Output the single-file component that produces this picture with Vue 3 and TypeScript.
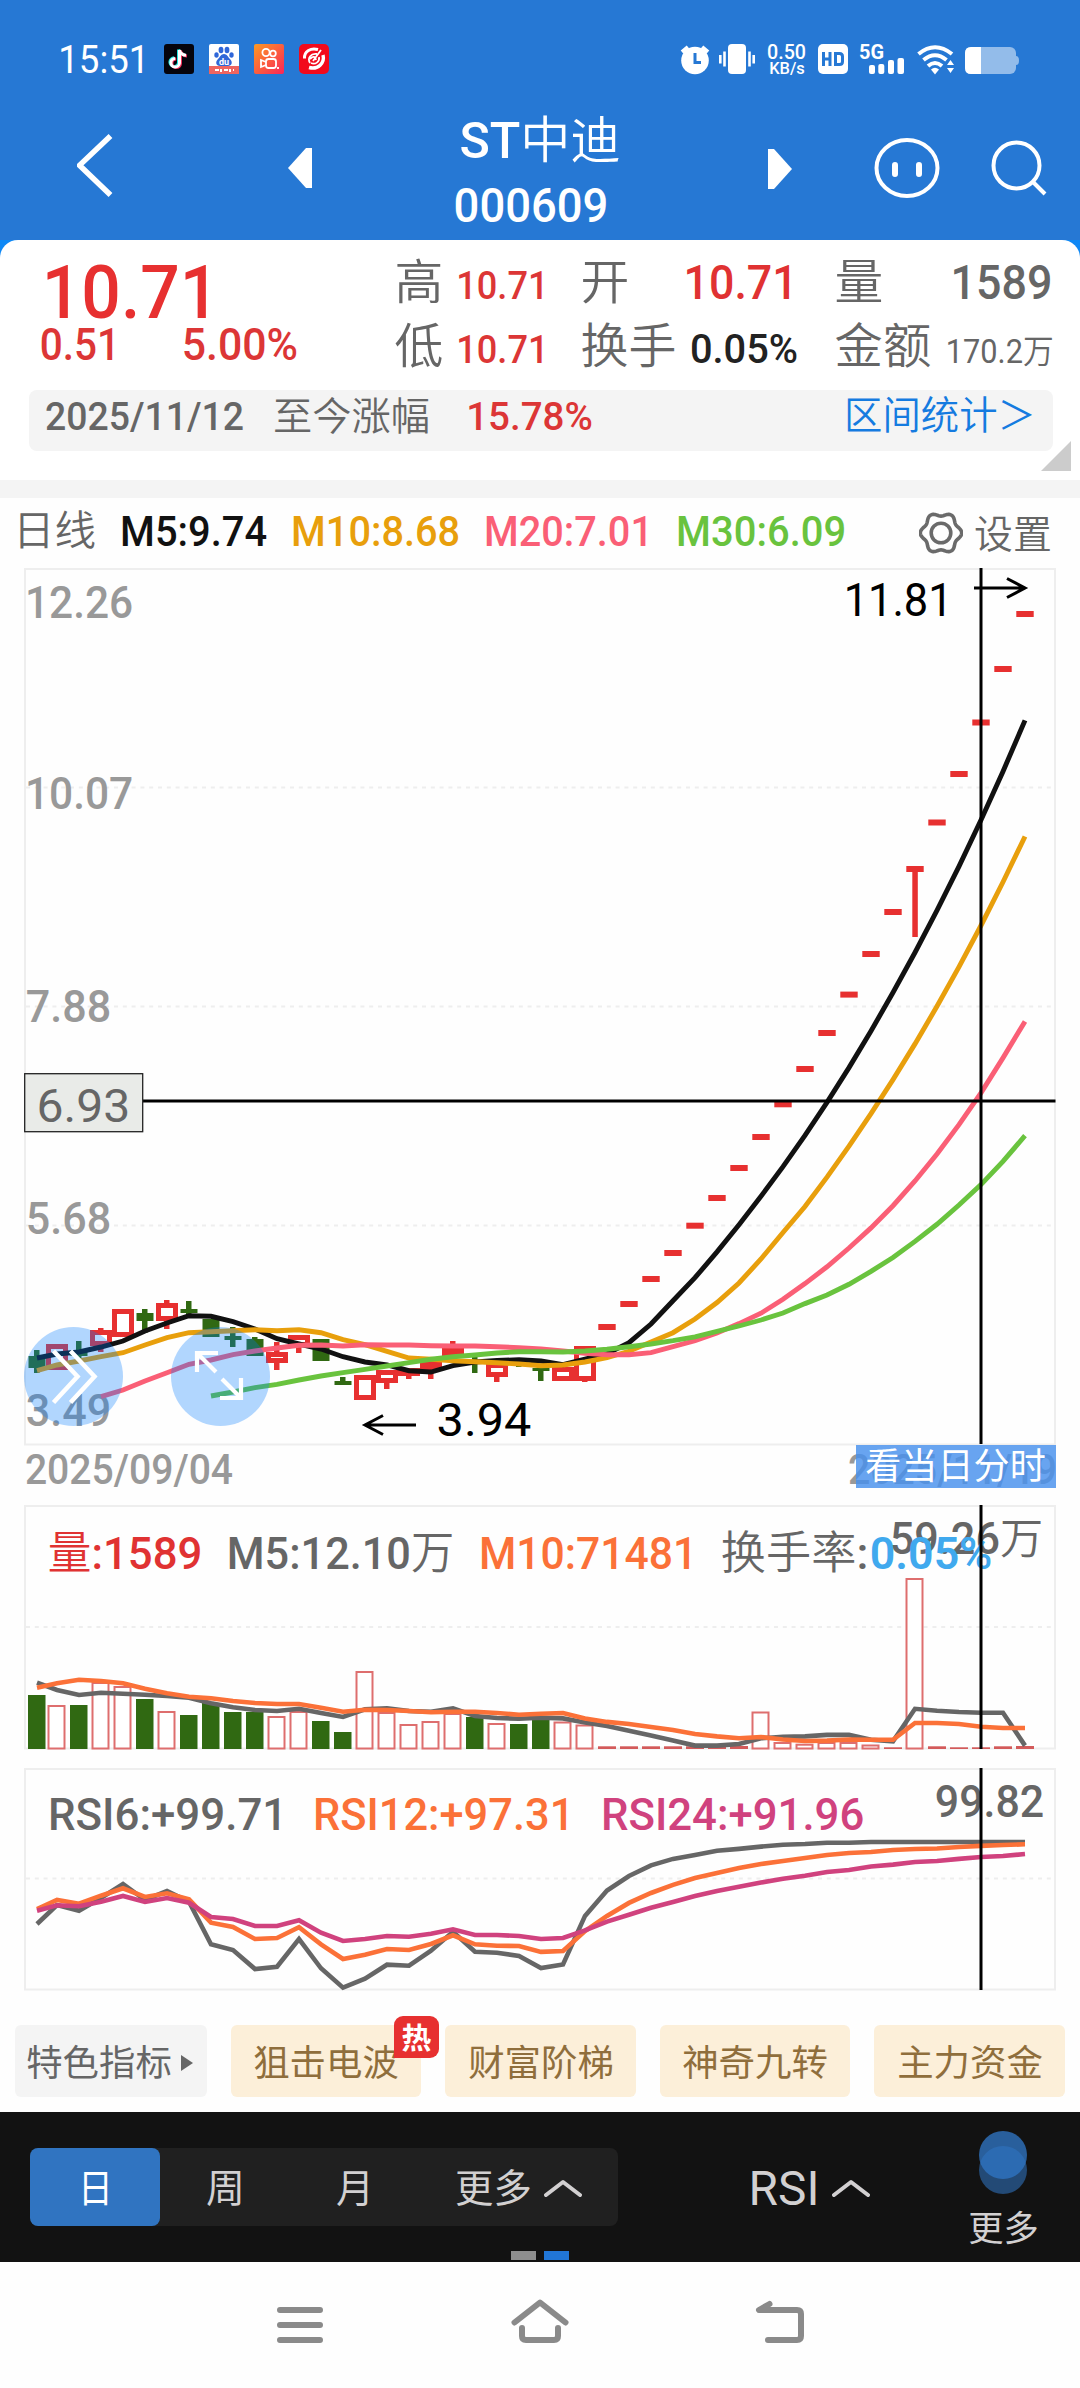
<script setup lang="ts">
import { defineComponent, h } from 'vue'

const FONT = 'Roboto, "Noto Sans CJK SC", sans-serif'

/* Side bearings of the outer glyphs, in em, so that widths describe the visible ink. */
function inkBox(text: string, x: number, w: number, size: number) {
  const first = text[0]
  const last = text[text.length - 1]
  const left = '1MR'.includes(first) ? 0.07 : 0.05
  const right = last === '1' ? 0.14 : 0.05
  return {
    x: +(x - left * size).toFixed(1),
    textLength: +(w + (left + right) * size).toFixed(1),
    lengthAdjust: 'spacingAndGlyphs',
    'font-size': size,
  }
}

/* Han characters are set in a lighter weight than the digits beside them. */
function runs(text: string, weight: number) {
  const parts = text.match(/[\u4e00-\u9fff]+|[^\u4e00-\u9fff]+/g) ?? [text]
  if (parts.length === 1) return text
  return parts.map(p => h('tspan', { 'font-weight': /[\u4e00-\u9fff]/.test(p) ? Math.min(weight, 350) : weight }, p))
}

/* SVG text placed by its ink: left edge x, baseline y, width w. */
const Ink = defineComponent({
  props: {
    t: { type: String, required: true },
    x: { type: Number, required: true },
    y: { type: Number, required: true },
    w: { type: Number, required: true },
    s: { type: Number, required: true },
    c: { type: String, default: '#666666' },
    b: { type: Number, default: 500 },
  },
  setup(p) {
    return () =>
      h('text', { ...inkBox(p.t, p.x, p.w, p.s), y: p.y, fill: p.c, 'font-weight': p.b, 'font-family': FONT }, runs(p.t, p.b))
  },
})

/* One run of text whose box is exactly its cap height and ink width. */
const Num = defineComponent({
  props: {
    t: { type: String, required: true },
    w: { type: Number, required: true },
    s: { type: Number, required: true },
    c: { type: String, default: '#666666' },
    b: { type: Number, default: 500 },
  },
  setup(p) {
    return () => {
      const height = Math.round(p.s * 0.711)
      return h('svg', { width: p.w, height, style: { display: 'block', overflow: 'visible', flex: 'none' } }, [
        h(Ink, { t: p.t, x: 0, y: height, w: p.w, s: p.s, c: p.c, b: p.b }),
      ])
    }
  },
})

const RED = '#e73030'
const GREEN = '#306912'

const cx = (i: number) => (i === 0 ? 37 : 35 + 22 * i)
const line = (ys: number[], start = 0) => ys.map((y, k) => `${cx(k + start)},${y}`).join(' ')

type Candle = { i: number; up: boolean; top: number; bot: number; hi: number; lo: number }
const raw: [number, number, number, number, number][] = [
  [0, 1356, 1368, 1350, 1373], [1, 1344, 1370, 1344, 1370], [0, 1352, 1356, 1341, 1362],
  [1, 1330, 1346, 1328, 1352], [1, 1309, 1337, 1309, 1337], [0, 1313, 1321, 1309, 1333],
  [1, 1303, 1321, 1300, 1329], [0, 1309, 1313, 1301, 1315], [0, 1319, 1337, 1319, 1337],
  [0, 1336, 1340, 1327, 1347], [0, 1339, 1356, 1337, 1356], [1, 1352, 1363, 1342, 1370],
  [1, 1335, 1347, 1335, 1353], [0, 1339, 1361, 1339, 1361], [0, 1381, 1385, 1377, 1385],
  [1, 1375, 1400, 1375, 1400], [1, 1370, 1383, 1370, 1389], [1, 1368, 1376, 1368, 1379],
  [1, 1361, 1370, 1361, 1379], [1, 1348, 1358, 1341, 1358], [0, 1360, 1364, 1357, 1373],
  [1, 1363, 1377, 1363, 1382], [0, 1360, 1364, 1358, 1367], [0, 1368, 1371, 1368, 1381],
  [1, 1367, 1381, 1367, 1381], [1, 1346, 1381, 1346, 1382],
]
const candles: Candle[] = raw.map(([up, top, bot, hi, lo], i) => ({ i, up: up === 1, top, bot, hi, lo }))

/* Sessions that opened and closed at the price limit. */
const limit = [
  1327, 1304, 1279, 1253, 1225.7, 1198, 1168, 1137, 1104.3, 1069, 1033, 994.6, 954, 912, 869, 822.5, 774, 722.5, 669, 614,
]
const avg = (n: number) =>
  limit.map((_, k) => limit.slice(Math.max(0, k - n + 1), k + 1).reduce((a, b) => a + b, 0) / n).slice(n - 1).map(v => +v.toFixed(1))

const ma5 = [
  1358, 1354, 1352, 1347, 1341, 1331, 1323, 1315.7, 1316.3, 1321.7, 1329, 1338.7, 1344, 1349, 1356.7, 1362, 1365, 1370.7,
  1372, 1365.7, 1362, 1360.5, 1359.7, 1361, 1364.7, 1359, 1353.7, 1342.7, 1324, 1300.7, ...avg(5),
]
const ma10 = [
  1370.7, 1365, 1361, 1356.7, 1352.7, 1345, 1337.7, 1332.7, 1331.7, 1330.7, 1329.7, 1330.7, 1329.7, 1332.7, 1339.7, 1344.7,
  1351.3, 1358, 1359.3, 1360.7, 1361.7, 1362.7, 1364, 1365.7, 1365, 1362, 1357.7, 1351.3, 1342, 1332.7, 1319, 1302.5, 1283,
  1259, 1232.5, ...avg(10),
]
const ma20 = [
  1396.7, 1390, 1381, 1372.7, 1364.3, 1360, 1354.7, 1351, 1348, 1345.3, 1345, 1346, 1344.7, 1345, 1345, 1345.7, 1346, 1346,
  1346.7, 1347.7, 1349, 1351, 1353.3, 1354.7, 1354.7, 1352.7, 1346.7, 1340.7, 1332.9, 1323.6, 1313.2, 1299.3, 1283.6,
  1266.8, 1248, 1227.9, 1205.7, 1181, 1154, 1124.6, 1092.9, 1057.9, 1021.4,
]
const ma30 = [
  1396, 1392, 1387.7, 1384.3, 1380, 1376, 1372.7, 1369.3, 1366, 1362.7, 1359.3, 1356.7, 1355, 1353, 1351.7, 1351.7, 1352,
  1351, 1349.3, 1346.7, 1344, 1340.7, 1336.8, 1331.4, 1326, 1320, 1313, 1303.6, 1295, 1284.3, 1271.4, 1257.5, 1241.4,
  1224.3, 1205, 1184.6, 1161.4, 1135.7,
]
const priceLines = [
  { c: '#111111', p: line(ma5) },
  { c: '#e89f0c', p: line(ma10) },
  { c: '#fa5f76', p: line(ma20, 3) },
  { c: '#69c33e', p: line(ma30, 8) },
]

const volTop = [
  1695, 1705, 1705, 1682, 1686, 1699, 1711, 1715, 1703, 1712, 1712, 1716, 1711, 1721, 1732, 1671, 1712, 1724, 1721, 1713,
  1717, 1723, 1724, 1719, 1721.5, 1724.5, 1746.3, 1746.3, 1746.3, 1746.3, 1746.3, 1746.3, 1746, 1711.5, 1742, 1743.7, 1742,
  1742, 1744.5, 1747.3, 1578, 1746.3, 1747.3, 1747.3, 1746.3, 1746,
]
const volGreen = new Set([0, 2, 5, 7, 8, 9, 10, 13, 14, 20, 22, 23])
const vol5 = [
  1682.7, 1690, 1695, 1692.7, 1693.7, 1694.7, 1696, 1697.7, 1703.3, 1707.3, 1710, 1711, 1708.7, 1713, 1717, 1709.3, 1708.3,
  1711, 1711.7, 1708.3, 1716, 1718, 1718.7, 1717.7, 1718.4, 1722.6, 1726, 1730.7, 1735.6, 1740.6, 1745.6, 1745.6, 1744,
  1738.3, 1736.8, 1736.4, 1734.9, 1734.9, 1739.8, 1741.4, 1708.8, 1710.8, 1712, 1712.7, 1712.7, 1745.6,
]
const vol10 = [
  1687.7, 1683.3, 1679.7, 1681, 1683.3, 1688.7, 1693.3, 1696.7, 1698.3, 1701, 1703, 1704, 1704, 1707.7, 1711.7, 1709.7,
  1710, 1711, 1712.3, 1711.7, 1711.7, 1713, 1714.7, 1713.7, 1713, 1718.4, 1721.9, 1724, 1727, 1729.9, 1734, 1736.4, 1738.3,
  1737, 1739.5, 1741, 1740.6, 1739.5, 1739.8, 1739.8, 1723, 1723, 1724, 1726.8, 1728, 1728,
]
const rsi6 = [
  1924, 1905, 1910.7, 1898, 1884, 1900, 1891, 1901.7, 1944.3, 1950, 1969, 1966.7, 1939, 1968.3, 1987.7, 1978.7, 1964.7,
  1965.7, 1950.7, 1931.7, 1951.7, 1952.7, 1956, 1968, 1964.5, 1915.9, 1890.6, 1876, 1865.4, 1858.9, 1855, 1850.8, 1848.9,
  1846.6, 1844.7, 1844, 1842.8, 1842.8, 1842, 1842, 1842, 1842, 1842, 1842, 1842, 1842,
]
const rsi12 = [
  1909, 1900, 1903.7, 1895.7, 1888.3, 1897, 1893.3, 1899.3, 1922.7, 1927, 1939, 1938, 1927.3, 1944.3, 1959, 1954.7, 1949,
  1950, 1944, 1935.3, 1944.3, 1945.7, 1946, 1951.9, 1951, 1931, 1915.9, 1902.9, 1893, 1884.9, 1878, 1873, 1868, 1864, 1861,
  1858, 1855, 1853, 1852, 1850, 1849, 1848.5, 1847, 1845.9, 1845, 1844.3,
]
const rsi24 = [
  1910.7, 1905.3, 1906.3, 1901.7, 1896, 1902, 1898, 1902.7, 1917, 1919, 1926, 1926, 1920.3, 1932.7, 1941, 1939, 1936,
  1936.7, 1933.7, 1929.3, 1935, 1935, 1936, 1939, 1938, 1930.4, 1921.6, 1914.7, 1907.8, 1902, 1896, 1891, 1886.8, 1882.6,
  1878.8, 1875.7, 1872, 1870, 1866.5, 1864.6, 1862, 1861, 1858.9, 1857, 1856, 1854,
]

const priceLabels = [
  { t: '12.26', w: 103, y: 618 }, { t: '10.07', w: 103, y: 809 }, { t: '7.88', w: 81, y: 1022 },
  { t: '5.68', w: 81, y: 1233.5 }, { t: '3.49', w: 81, y: 1426 },
]
const volLabels = [
  { t: '量:1589', x: 50, w: 150, c: '#e03232' },
  { t: 'M5:12.10万', x: 230, w: 222, c: '#666666' },
  { t: 'M10:71481', x: 482, w: 209, c: '#fb7138' },
  { t: '换手率:', x: 723, w: 143, c: '#666666' },
]
const rsiLabels = [
  { t: 'RSI6:+99.71', x: 51, w: 230, c: '#666666' },
  { t: 'RSI12:+97.31', x: 316, w: 252, c: '#fb7138' },
  { t: 'RSI24:+91.96', x: 604, w: 258, c: '#d0427e' },
]
const stats = [
  [
    { k: '高', kw: 44, v: '10.71', w: 84, s: 39.5, c: '#dc3636' },
    { k: '低', kw: 44, v: '10.71', w: 84, s: 39.5, c: '#dc3636' },
  ],
  [
    { k: '开', kw: 44, v: '10.71', w: 104, s: 48, c: '#e03232' },
    { k: '换手', kw: 91, v: '0.05%', w: 104, s: 41, c: '#222222' },
  ],
  [
    { k: '量', kw: 44, v: '1589', w: 96, s: 48, c: '#666666' },
    { k: '金额', kw: 92, v: '170.2万', w: 104, s: 33, c: '#666666' },
  ],
]
const features = ['狙击电波', '财富阶梯', '神奇九转', '主力资金']

/* Six-lobed outline of the settings gear. */
const gear = Array.from({ length: 96 }, (_, k) => {
  const a = (k / 96) * Math.PI * 2
  const r = 18.8 - 1.9 * Math.cos(6 * a)
  return `${(22 + r * Math.sin(a)).toFixed(2)},${(22 - r * Math.cos(a)).toFixed(2)}`
}).join(' ')
</script>

<template>
  <div class="screen">
    <header class="top">
      <div class="status">
        <Num class="clock" t="15:51" :w="83" :s="38.5" c="#fff" :b="400" />
        <svg class="app" width="30" height="30" viewBox="0 0 30 30">
          <rect width="30" height="30" rx="3" fill="#05040c" />
          <g fill="none" stroke-width="3">
            <path d="M15.5 6v13a4.3 4.3 0 1 1-4.3-4.6M15.5 6c.6 3.2 3 5 6.5 5.3" stroke="#25e4e0" transform="translate(-1 -.6)" />
            <path d="M15.5 6v13a4.3 4.3 0 1 1-4.3-4.6M15.5 6c.6 3.2 3 5 6.5 5.3" stroke="#f4305c" transform="translate(1 .6)" />
            <path d="M15.5 6v13a4.3 4.3 0 1 1-4.3-4.6M15.5 6c.6 3.2 3 5 6.5 5.3" stroke="#fff" />
          </g>
        </svg>
        <svg class="app" width="30" height="30" viewBox="0 0 30 30">
          <rect width="30" height="30" rx="2" fill="#fff" />
          <rect y="22" width="30" height="8" fill="#ee6560" />
          <g fill="#2f66d8">
            <ellipse cx="12" cy="6" rx="2.4" ry="3.3" /><ellipse cx="18" cy="6" rx="2.4" ry="3.3" />
            <ellipse cx="7.5" cy="11" rx="2.2" ry="2.7" /><ellipse cx="22.5" cy="11" rx="2.2" ry="2.7" />
            <path d="M15 10c3 0 4 3 6 5 3 3 2 7-2 7h-8c-4 0-5-4-2-7 2-2 3-5 6-5z" />
          </g>
          <text x="15" y="21" font-size="9" font-weight="700" fill="#fff" text-anchor="middle">du</text>
          <path d="M6 26h4M12 25v3M15 26h4M21 25v3M24 26h1" stroke="#fff" stroke-width="2" />
        </svg>
        <svg class="app" width="30" height="30" viewBox="0 0 30 30">
          <defs><linearGradient id="ks" x1="0" y1="0" x2="1" y2="1"><stop offset="0" stop-color="#fb9a24" /><stop offset="1" stop-color="#fb2458" /></linearGradient></defs>
          <rect width="30" height="30" rx="2" fill="url(#ks)" />
          <g fill="none" stroke="#fff" stroke-width="1.8">
            <circle cx="12" cy="8.5" r="3.6" /><circle cx="19" cy="9.5" r="2.8" />
            <rect x="12" y="15" width="10" height="9" rx="2.5" /><path d="M12 18l-5-2v7l5-2M24 25v-2" />
          </g>
        </svg>
        <svg class="app" width="30" height="30" viewBox="0 0 30 30">
          <rect width="30" height="30" rx="5" fill="#f20a1c" />
          <g fill="none" stroke="#fff">
            <path d="M19 5.5C12 3.500 5 7 5.500 14.500" stroke-width="3" />
            <path d="M24 11c2 8-5 15-14 12.500" stroke-width="3.4" />
            <path d="M22 6l-8 11M18 10c-6-1-10 4-7 9M20 13c1 5-4 8-8 6M11 15c3-3 5-3 6 1" stroke-width="1.8" />
          </g>
        </svg>
        <svg class="sys" width="340" height="30" viewBox="681 44 340 30">
          <circle cx="696" cy="60.5" r="13.8" fill="#fff" />
          <path d="M683 52l6-5M709 52l-6-5" stroke="#fff" stroke-width="4" />
          <path d="M696 53v9.500h6" stroke="#2678d4" stroke-width="3" fill="none" />
          <rect x="729" y="44" width="18" height="30" rx="4" fill="#fff" />
          <path d="M725.5 51.500v15M750.5 51.500v15M721.3 55v8.500M754.7 55v8.500" stroke="#fff" stroke-width="2.6" />
          <Ink t="0.50" :x="769" :y="58.5" :w="37" :s="20" c="#fff" />
          <Ink t="KB/s" :x="771" :y="74" :w="34" :s="16.5" c="#fff" />
          <Ink t="5G" :x="861" :y="59" :w="23" :s="20" c="#fff" :b="700" />
          <rect x="819" y="44" width="30" height="30" rx="5" fill="#fff" />
          <path d="M824.5 52v14M831 52v14M824.5 59h6.500M836.5 53.500h4q3 0 3 3v5q0 3-3 3h-4z" fill="none" stroke="#2678d4" stroke-width="3" />
          <g fill="#fff">
            <rect x="870" y="65" width="6" height="9" rx="2" /><rect x="879.3" y="64" width="6" height="10" rx="2" />
            <rect x="889" y="60" width="6" height="14" rx="2" /><rect x="898.5" y="58" width="6.5" height="16" rx="2" />
            <path d="M932 69.500q4-3.500 8 0l-4 5z" /><path d="M948 65l3.500-5 3.500 5zM948 68l3.500 5 3.500-5z" />
          </g>
          <path d="M919.5 54q16.500-13.500 33.500 0M924.500 60q11.500-9.500 23 0M929 66q7-6 14 0" fill="none" stroke="#fff" stroke-width="4" />
          <rect x="966" y="47" width="51" height="27" rx="6" fill="#93bcea" />
          <path d="M972 47h10v27h-10q-6 0-6-6V53q0-6 6-6z" fill="#fff" /><path d="M1017 56q3 0 3 4.500t-3 4.500z" fill="#93bcea" />
        </svg>
      </div>
      <div class="nav">
        <svg class="back" width="36" height="64" viewBox="77 133 36 64"><path d="M110.500 136L79.500 165.300l31 29.700" fill="none" stroke="#fff" stroke-width="5.5" /></svg>
        <svg class="prev" width="24" height="40" viewBox="0 0 24 40"><path d="M0 20L18 0h6v40h-6z" fill="#fff" /></svg>
        <div class="title">
          <Num t="ST中迪" :w="156" :s="50" c="#fff" />
          <Num class="code" t="000609" :w="150" :s="47.5" c="#fff" />
        </div>
        <svg class="next" width="24" height="40" viewBox="0 0 24 40"><path d="M24 20L6 0H0v40h6z" fill="#fff" /></svg>
        <svg class="face" width="66" height="62" viewBox="0 0 66 62">
          <ellipse cx="33" cy="31" rx="30.5" ry="28" fill="none" stroke="#fff" stroke-width="4" />
          <path d="M21 28v9M45 28v9" stroke="#fff" stroke-width="6" stroke-linecap="round" />
        </svg>
        <svg class="find" width="56" height="56" viewBox="0 0 56 56">
          <circle cx="25.5" cy="25.5" r="23" fill="none" stroke="#fff" stroke-width="4" /><path d="M42 42l12 12" stroke="#fff" stroke-width="4" />
        </svg>
      </div>
    </header>

    <section class="quote">
      <div class="summary">
        <div class="last">
          <Num class="big" t="10.71" :w="162" :s="74" :c="RED" />
          <div class="change">
            <Num t="0.51" :w="72" :s="43.5" c="#dc3636" />
            <Num t="5.00%" :w="112" :s="43.5" c="#dc3636" />
          </div>
        </div>
        <div v-for="(col, n) in stats" :key="n" class="stat-col" :class="'col' + n">
          <div v-for="r in col" :key="r.k" class="stat">
            <Num :t="r.k" :w="r.kw" :s="47.5" :b="350" />
            <Num :t="r.v" :w="r.w" :s="r.s" :c="r.c" :b="r.s < 35 ? 400 : 500" />
          </div>
        </div>
      </div>
      <div class="range">
        <Num t="2025/11/12" :w="195" :s="39.5" />
        <Num class="since" t="至今涨幅" :w="153" :s="39" :b="350" />
        <Num class="pct" t="15.78%" :w="122" :s="39.5" c="#dc3636" />
        <Num class="link" t="区间统计＞" :w="188" :s="38.5" c="#157be0" :b="350" />
      </div>
      <svg class="corner" width="30" height="30"><path d="M30 0v30H0z" fill="#cccccc" /></svg>
    </section>

    <div class="band"></div>

    <div class="legend">
      <Num t="日线" :w="79" :s="41" :b="350" />
      <Num class="l5" t="M5:9.74" :w="142" :s="42" c="#111" />
      <Num class="l10" t="M10:8.68" :w="164" :s="42" c="#e89f0c" />
      <Num class="l20" t="M20:7.01" :w="160" :s="42" c="#fa5f76" />
      <Num class="l30" t="M30:6.09" :w="165" :s="42" c="#69c33e" />
      <svg class="gear" width="44" height="44" viewBox="0 0 44 44" fill="none" stroke="#6a6a6a" stroke-width="3.6">
        <polygon :points="gear" stroke-linejoin="round" /><circle cx="22" cy="22" r="9.8" />
      </svg>
      <Num class="set" t="设置" :w="74" :s="38.5" :b="350" />
    </div>

    <svg class="chart" width="1080" height="937" viewBox="0 568 1080 937">
      <g fill="none" stroke="#eeeeee" stroke-width="2">
        <rect x="25" y="569" width="1030" height="875.5" />
        <path d="M26 787.500H1055M26 1006.500H1055M26 1225.500H1055" stroke-dasharray="4 4.8" />
      </g>
      <Ink v-for="l in priceLabels" :key="l.t" :t="l.t" :x="28" :y="l.y" :w="l.w" :s="44" c="#999" />
      <Ink t="2025/09/04" :x="27" :y="1484" :w="204" :s="42" c="#999" />
      <Ink t="2025/11/19" :x="850" :y="1484" :w="205" :s="42" c="#999" />
      <template v-for="k in candles" :key="k.i">
        <rect :x="cx(k.i) - 3" :y="k.hi" width="5.5" :height="k.lo - k.hi" :fill="k.up ? RED : GREEN" />
        <rect v-if="k.up" :x="cx(k.i) - 8.5" :y="k.top + 2.5" width="17" :height="Math.max(1, k.bot - k.top - 5)" fill="#fff" :stroke="RED" stroke-width="5" />
        <rect v-else :x="cx(k.i) - 8.5" :y="k.top" width="17" :height="k.bot - k.top" :fill="GREEN" />
      </template>
      <rect v-for="(y, k) in limit" :key="'d' + k" :x="cx(k + 26) - 8.7" :y="y - 3" width="17.4" height="6" :fill="RED" />
      <rect x="912.3" y="869" width="5.5" height="68" :fill="RED" />
      <polyline v-for="l in priceLines" :key="l.c" :points="l.p" fill="none" :stroke="l.c" stroke-width="4.9" />
      <path d="M143 1101H1055.500M981 568V1444" stroke="#000" stroke-width="3" />
      <rect x="24.7" y="1073.7" width="118" height="58" fill="#e9ebe8" stroke="#222" stroke-width="1.3" />
      <Ink t="6.93" :x="39" :y="1121.5" :w="89" :s="47" :b="400" />
      <g fill="none" stroke="#000" stroke-width="3">
        <path d="M974 588h50M1007 578.500l18 9.500-18 9.500" /><path d="M416 1425h-50M383 1415.500l-18 9.500 18 9.500" />
      </g>
      <Ink t="11.81" :x="847" :y="616" :w="99" :s="47" c="#000" :b="400" />
      <Ink t="3.94" :x="439" :y="1436" :w="90" :s="47" c="#000" :b="400" />
      <g fill="#007aff" fill-opacity=".3"><circle cx="73.5" cy="1376.5" r="49.5" /><circle cx="220.5" cy="1376.5" r="49.5" /></g>
      <path d="M53.500 1351l24 25.500-24 26M70.500 1351l24 25.500-24 26" fill="none" stroke="#fff" stroke-width="4.5" />
      <path d="M218 1353h-21v19M197 1353l19 19M222 1379l19 19M220 1398h21v-20" fill="none" stroke="#fff" stroke-width="4.2" />
      <rect x="856" y="1445" width="200" height="43" fill="#4790ed" fill-opacity=".82" />
      <Ink t="看当日分时" :x="867" :y="1479" :w="177" :s="36" c="#fff" :b="400" />
    </svg>

    <svg class="chart" width="1080" height="263" viewBox="0 1505 1080 263">
      <g fill="none" stroke="#eeeeee" stroke-width="2">
        <rect x="25" y="1506" width="1030" height="242.5" /><path d="M26 1627H1055" stroke-dasharray="4 4.8" />
      </g>
      <g v-for="(y, i) in volTop" :key="i">
        <rect v-if="volGreen.has(i)" :x="cx(i) - 9" :y="y" width="17.5" :height="1749 - y" :fill="GREEN" />
        <rect v-else-if="y < 1746" :x="cx(i) - 8.5" :y="y + 1" width="16" :height="1747.5 - y" fill="#fff" stroke="#de6e6e" stroke-width="2" />
        <rect v-else :x="cx(i) - 9" :y="y" width="18" :height="1749 - y" fill="#d35a5a" />
      </g>
      <g fill="none" stroke-width="4.6">
        <polyline :points="line(vol5)" stroke="#666" /><polyline :points="line(vol10)" stroke="#fb7138" />
      </g>
      <Ink t="59.26万" :x="892" :y="1554" :w="149" :s="43.5" />
      <Ink v-for="l in volLabels" :key="l.t" :t="l.t" :x="l.x" :y="1568.5" :w="l.w" :s="45" :c="l.c" />
      <Ink t="0.05%" :x="872" :y="1568.5" :w="118" :s="45" c="#40a9ee" :b="600" />
      <path d="M981 1505V1749" stroke="#000" stroke-width="3" />
    </svg>

    <svg class="chart" width="1080" height="232" viewBox="0 1768 1080 232">
      <g fill="none" stroke="#eeeeee" stroke-width="2">
        <rect x="25" y="1769" width="1030" height="220.5" /><path d="M26 1878.500H1055" stroke-dasharray="4 4.8" />
      </g>
      <g fill="none" stroke-width="4.6">
        <polyline :points="line(rsi6)" stroke="#666" /><polyline :points="line(rsi12)" stroke="#fb7138" /><polyline :points="line(rsi24)" stroke="#d0427e" />
      </g>
      <Ink v-for="l in rsiLabels" :key="l.t" :t="l.t" :x="l.x" :y="1830" :w="l.w" :s="45" :c="l.c" />
      <Ink t="99.82" :x="937" :y="1817" :w="105" :s="44" />
      <path d="M981 1768V1990" stroke="#000" stroke-width="3" />
    </svg>

    <div class="features">
      <div class="chip plain">
        <Num t="特色指标" :w="142" :s="36" :b="400" />
        <svg width="12" height="16"><path d="M0 0l12 8-12 8z" fill="#666" /></svg>
      </div>
      <div v-for="(f, i) in features" :key="f" class="chip">
        <Num :t="f" :w="142" :s="36" c="#8f6e3c" :b="400" />
        <div v-if="i === 0" class="hot"><Num t="热" :w="27" :s="29" c="#fff" :b="700" /></div>
      </div>
    </div>

    <div class="periods">
      <div class="segments">
        <div class="seg on"><Num t="日" :w="31" :s="39" c="#fff" :b="400" /></div>
        <div class="seg"><Num t="周" :w="35" :s="39" c="#d2d0d1" :b="400" /></div>
        <div class="seg"><Num t="月" :w="34" :s="39" c="#d2d0d1" :b="400" /></div>
        <div class="seg wide">
          <Num t="更多" :w="73" :s="38.5" c="#d2d0d1" :b="400" />
          <svg class="caret" width="38" height="18"><path d="M2 16L19 3l17 13" /></svg>
        </div>
      </div>
      <div class="indicator">
        <Num t="RSI" :w="65" :s="48" c="#d2d0d1" :b="400" />
        <svg class="caret" width="38" height="18"><path d="M2 16L19 3l17 13" /></svg>
      </div>
      <div class="more">
        <svg width="48" height="64"><circle cx="24" cy="39" r="24" fill="#234a76" /><circle cx="24" cy="24" r="24" fill="#2f74c3" fill-opacity=".78" /></svg>
        <Num t="更多" :w="67" :s="35" c="#d2d0d1" :b="400" />
      </div>
      <div class="pager"><i></i><i class="cur"></i></div>
    </div>

    <nav class="system">
      <svg width="298" height="46" viewBox="273 2298 298 46"><path d="M280 2310h40M280 2325h40M280 2340h40M514.500 2322.500L540 2302.500l25.500 20M522 2328v8q0 4 4 4h28q4 0 4-4v-8" /></svg>
      <svg width="54" height="46" viewBox="753 2298 54 46"><path d="M769.500 2304l-10.500 6h38q4 0 4 4v22q0 4-4 4h-29" /></svg>
    </nav>
  </div>
</template>

<style>
body { margin: 0; background: #fff; }
</style>

<style scoped>
.screen { position: relative; z-index: 0; width: 1080px; height: 2388px; overflow: hidden; background: #fefefe; font-family: Roboto, "Noto Sans CJK SC", sans-serif; }
svg { display: block; flex: none; }
.top { box-sizing: border-box; height: 240px; padding-top: 44px; background: #2678d4; }
.status { display: flex; align-items: flex-start; height: 30px; padding-left: 61px; }
.clock { margin: 2px 5px 0 0; }
.app { margin-left: 15px; }
.sys { margin-left: 351px; overflow: visible; }
.nav { display: flex; height: 166px; align-items: flex-start; padding-left: 77px; }
.back { margin-top: 59px; }
.prev { margin: 74px 0 0 175px; }
.title { display: flex; flex-direction: column; box-sizing: border-box; width: 170px; margin: 48px 0 0 144px; padding-left: 6px; }
.code { margin: 30px 0 0 -6px; }
.next { margin: 75px 0 0 142px; }
.face { margin: 63px 0 0 82px; }
.find { margin: 66px 0 0 51px; }
.quote { position: relative; height: 240px; background: #fff; border-radius: 18px 18px 0 0; }
.quote::before { content: ''; position: absolute; z-index: -1; inset: 0 0 auto 0; height: 30px; background: #0f88f5; }
.summary { display: flex; height: 150px; padding-left: 42px; }
.last { width: 254px; padding-top: 25px; }
.big { margin-left: 5px; }
.change { display: flex; justify-content: space-between; margin-top: 11px; }
.stat-col { display: flex; flex-direction: column; padding-top: 25px; }
.stat { display: flex; justify-content: space-between; align-items: flex-end; height: 34px; margin-bottom: 30px; }
.col0 { width: 146px; margin-left: 101px; }
.col1 { width: 213px; margin-left: 40px; }
.col1 .stat:first-child { margin-right: 5px; }
.col2 { width: 215px; margin-left: 41px; }
.col2 .stat:first-child { margin-right: 2px; }
.range { display: flex; box-sizing: border-box; width: 1024px; height: 61px; margin-left: 29px; padding: 12px 19px 0 18px; border-radius: 8px; background: #f4f4f4; }
.since { margin-left: 33px; }
.pct { margin-left: 41px; }
.link { margin-left: auto; }
.corner { position: absolute; right: 9px; bottom: 9px; }
.band { height: 18px; background: #f4f4f4; }
.legend { display: flex; box-sizing: border-box; height: 70px; padding: 18px 0 0 15px; }
.l5 { margin-left: 29px; }
.l10 { margin-left: 29px; }
.l20 { margin-left: 29px; }
.l30 { margin-left: 32px; }
.gear { margin: -5px 0 0 75px; }
.set { margin: 5px 0 0 13px; }
.chart { overflow: hidden; }
.features { display: flex; gap: 24px; height: 87px; padding: 25px 15px 0; }
.chip { position: relative; display: flex; justify-content: center; align-items: center; box-sizing: border-box; width: 191px; height: 72px; padding-top: 3px; border-radius: 6px; background: #fcefd9; }
.plain { justify-content: flex-start; gap: 11px; width: 192px; padding-left: 13px; background: #f4f4f4; }
.hot { position: absolute; top: -9px; right: -18px; display: flex; align-items: center; justify-content: center; box-sizing: border-box; width: 45px; height: 42px; padding-top: 2px; border-radius: 9px 9px 9px 0; background: #e73030; }
.periods { position: relative; display: flex; height: 150px; background: #121212; }
.segments { display: flex; width: 588px; height: 78px; margin: 36px 0 0 30px; border-radius: 8px; background: #202020; }
.seg { display: flex; align-items: center; justify-content: center; box-sizing: border-box; width: 130px; padding-top: 2px; border-radius: 8px; }
.seg.on { background: #3074c1; }
.seg.wide { width: 198px; gap: 14px; }
.caret path { fill: none; stroke: #d2d0d1; stroke-width: 4; stroke-linecap: round; stroke-linejoin: round; }
.indicator { display: flex; align-items: center; gap: 15px; height: 78px; margin: 37px 0 0 134px; }
.more { display: flex; flex-direction: column; align-items: center; gap: 21px; width: 68px; margin: 19px 0 0 99px; }
.pager { position: absolute; left: 511px; bottom: 2px; display: flex; gap: 8px; }
.pager i { width: 25px; height: 9px; background: #8e8e8e; }
.pager .cur { background: #2176d6; }
.system { display: flex; gap: 182px; height: 126px; padding: 36px 0 0 273px; box-sizing: border-box; background: #fefefe; }
.system path { fill: none; stroke: #8a8a8a; stroke-width: 6; stroke-linecap: round; stroke-linejoin: round; }
</style>
